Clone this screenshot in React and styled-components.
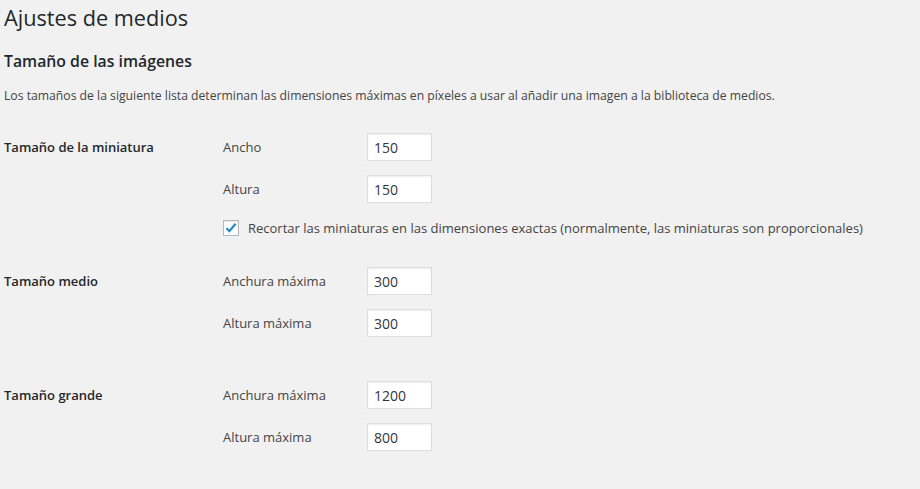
import React from "react"
import styled, { createGlobalStyle } from "styled-components"

const GlobalStyle = createGlobalStyle`
  html, body {
    margin: 0;
    padding: 0;
    background: #f1f1f1;
  }
  body {
    font-family: "Open Sans", "Noto Sans", sans-serif;
    font-size: 13px;
    color: #444;
  }
`

const Wrap = styled.div`
  padding: 0 0 0 4px;
  width: 916px;
  height: 489px;
  overflow: hidden;
`
const Title = styled.h1`
  margin: 3px 0 0;
  font-size: 21.7px;
  line-height: 29px;
  font-weight: 400;
  color: #23282d;
`
const SectionTitle = styled.h2`
  margin: 18px 0 0;
  font-size: 15.8px;
  line-height: 22px;
  font-weight: 600;
  color: #23282d;
`
const Intro = styled.p`
  margin: 15px 0 0;
  font-size: 12.2px;
  line-height: 18px;
  color: #444;
`
const Table = styled.div`
  display: flex;
  flex-direction: column;
`
const Row = styled.div`
  display: grid;
  grid-template-columns: 219px 1fr;
  margin-top: ${props => props.gap}px;
`
const RowLabel = styled.div`
  font-weight: 600;
  color: #23282d;
  line-height: 28px;
`
const Fields = styled.div`
  display: flex;
  flex-direction: column;
  gap: 14px;
`
const Field = styled.label`
  display: flex;
  align-items: center;
  height: 28px;
`
const FieldName = styled.span`
  width: 144px;
  color: #444;
`
const NumberInput = styled.input`
  box-sizing: border-box;
  width: 65px;
  height: 28px;
  padding: 3px 6px;
  border: 1px solid #ddd;
  box-shadow: inset 0 1px 2px rgba(0, 0, 0, 0.07);
  background: #fff;
  font-family: inherit;
  font-size: 14px;
  color: #32373c;
  outline: none;
`
const CheckLine = styled.label`
  display: flex;
  align-items: center;
  gap: 9px;
  margin-top: 3px;
  line-height: 16px;
  color: #444;
`
const CheckBox = styled.span`
  box-sizing: border-box;
  width: 16px;
  height: 16px;
  border: 1px solid #b4b9be;
  background: #fff;
  box-shadow: inset 0 1px 2px rgba(0, 0, 0, 0.1);
  display: flex;
  align-items: center;
  justify-content: center;
`

const Check = () => (
  <svg width="14" height="14" viewBox="0 0 14 14">
    <path d="M2.5 7.2 L5.4 10.2 L11.6 2.8" fill="none" stroke="#1e8cbe" strokeWidth="2.2" />
  </svg>
)

const sizes = [
  {
    label: "Tamaño de la miniatura",
    gap: 28,
    fields: [["Ancho", "150"], ["Altura", "150"]],
    crop: true,
  },
  {
    label: "Tamaño medio",
    gap: 31,
    fields: [["Anchura máxima", "300"], ["Altura máxima", "300"]],
  },
  {
    label: "Tamaño grande",
    gap: 44,
    fields: [["Anchura máxima", "1200"], ["Altura máxima", "800"]],
  },
]

export default function App() {
  return (
    <>
      <GlobalStyle />
      <Wrap>
        <Title>Ajustes de medios</Title>
        <SectionTitle>Tamaño de las imágenes</SectionTitle>
        <Intro>Los tamaños de la siguiente lista determinan las dimensiones máximas en píxeles a usar al añadir una imagen a la biblioteca de medios.</Intro>
        <Table>
          {sizes.map(size => (
            <Row key={size.label} gap={size.gap}>
              <RowLabel>{size.label}</RowLabel>
              <Fields>
                {size.fields.map(([name, value]) => (
                  <Field key={name}>
                    <FieldName>{name}</FieldName>
                    <NumberInput type="text" defaultValue={value} />
                  </Field>
                ))}
                {size.crop && (
                  <CheckLine>
                    <CheckBox><Check /></CheckBox>
                    Recortar las miniaturas en las dimensiones exactas (normalmente, las miniaturas son proporcionales)
                  </CheckLine>
                )}
              </Fields>
            </Row>
          ))}
        </Table>
      </Wrap>
    </>
  )
}
